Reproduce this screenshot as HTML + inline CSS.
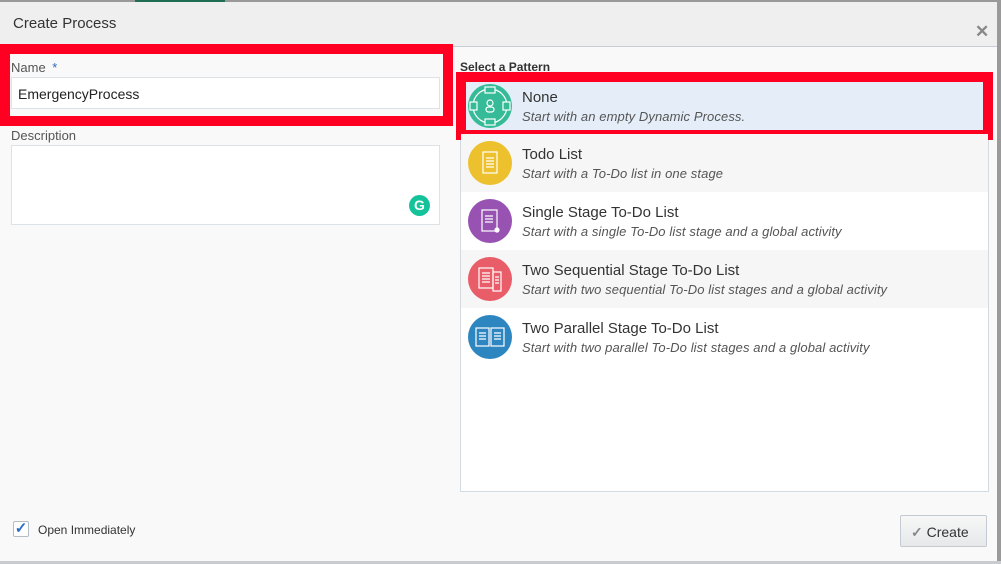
<!DOCTYPE html>
<html><head><style>
*{margin:0;padding:0;box-sizing:border-box}
body{width:1001px;height:564px;overflow:hidden;background:#f9f9f9;font-family:"Liberation Sans",sans-serif;position:relative;color:#333}
.a{position:absolute}
.row{position:absolute;left:461px;width:527px;height:58px}
.circ{position:absolute;left:7px;top:7px;width:44px;height:44px;border-radius:50%}
.t{position:absolute;left:61px;top:12px;font-size:15px;color:#333}
.s{position:absolute;left:61px;top:32px;font-size:13px;font-style:italic;color:#555;letter-spacing:0.1px}
</style></head><body>
<div class="a" style="left:0;top:0;width:1001px;height:2px;background:#999"></div>
<div class="a" style="left:135px;top:0;width:90px;height:2px;background:#1f6d52"></div>
<div class="a" style="left:0;top:2px;width:997px;height:45px;background:#efefef;border-bottom:1px solid #c5ced7"></div>
<div class="a" style="left:997px;top:0;width:4px;height:564px;background:#9a9a9a"></div>
<div class="a" style="left:0;top:561px;width:1001px;height:3px;background:#c8ccd0"></div>
<div class="a" style="left:13px;top:15px;font-size:15px;color:#333">Create Process</div>
<div class="a" style="left:975px;top:22px;font-size:17px;font-weight:bold;color:#888">✕</div>

<div class="a" style="left:0;top:44px;width:453px;height:82px;border:10px solid #ff0022;background:#f9f9f9"></div>
<div class="a" style="left:11px;top:60px;font-size:13px;color:#555">Name <span style="color:#2d6bb3;margin-left:3px">*</span></div>
<div class="a" style="left:11px;top:77px;width:429px;height:32px;background:#fff;border:1px solid #dde2e7;font-size:14px;padding:8px 6px;color:#222">EmergencyProcess</div>
<div class="a" style="left:11px;top:128px;font-size:13px;color:#555">Description</div>
<div class="a" style="left:11px;top:145px;width:429px;height:80px;background:#fff;border:1px solid #dde2e7"></div>
<div class="a" style="left:409px;top:195px;width:21px;height:21px;border-radius:50%;background:#15c39a;color:#fff;font-size:14px;font-weight:bold;text-align:center;line-height:21px">G</div>

<div class="a" style="left:460px;top:60px;font-size:12px;font-weight:bold;color:#333">Select a Pattern</div>
<div class="a" style="left:460px;top:72px;width:529px;height:420px;background:#fff;border:1px solid #d3dbe2"></div>
<div class="a" style="left:456px;top:72px;width:537px;height:68px;border:10px solid #ff0022;background:#e5eef8"></div>
<div class="row" style="top:77px">
 <div class="circ" style="background:#35bb97"><svg width="44" height="44" viewBox="0 0 44 44" fill="none" stroke="#fff" stroke-width="1.2"><circle cx="22" cy="22" r="17"/><rect x="17" y="3" width="10" height="6" fill="#35bb97"/><rect x="17" y="35" width="10" height="6" fill="#35bb97"/><rect x="2" y="18" width="7" height="8" fill="#35bb97"/><rect x="35" y="18" width="7" height="8" fill="#35bb97"/><circle cx="22" cy="19" r="3"/><rect x="18" y="23" width="8" height="5" rx="2.5"/></svg></div>
 <div class="t">None</div><div class="s">Start with an empty Dynamic Process.</div></div>
<div class="row" style="top:134px;background:#f6f6f6">
 <div class="circ" style="background:#ecc12d"><svg width="44" height="44" viewBox="0 0 44 44" fill="none" stroke="#fff" stroke-width="1.2"><rect x="15" y="11" width="14" height="21"/><path d="M18 17h8M18 20h8M18 23h8M18 26h8"/></svg></div>
 <div class="t">Todo List</div><div class="s">Start with a To-Do list in one stage</div></div>
<div class="row" style="top:192px">
 <div class="circ" style="background:#9752b2"><svg width="44" height="44" viewBox="0 0 44 44" fill="none" stroke="#fff" stroke-width="1.2"><rect x="14" y="11" width="15" height="21"/><path d="M17 17h8M17 20h8M17 23h8"/><circle cx="29" cy="31" r="2" fill="#fff"/></svg></div>
 <div class="t">Single Stage To-Do List</div><div class="s">Start with a single To-Do list stage and a global activity</div></div>
<div class="row" style="top:250px;background:#f6f6f6">
 <div class="circ" style="background:#e85d67"><svg width="44" height="44" viewBox="0 0 44 44" fill="none" stroke="#fff" stroke-width="1.2"><rect x="11" y="11" width="14" height="20"/><rect x="25" y="15" width="8" height="19"/><path d="M14 16h8M14 19h8M14 22h8M14 25h8M27 20h4M27 23h4M27 26h4"/></svg></div>
 <div class="t">Two Sequential Stage To-Do List</div><div class="s">Start with two sequential To-Do list stages and a global activity</div></div>
<div class="row" style="top:308px">
 <div class="circ" style="background:#2e86c1"><svg width="44" height="44" viewBox="0 0 44 44" fill="none" stroke="#fff" stroke-width="1.2"><rect x="8" y="13" width="13" height="18"/><rect x="23" y="13" width="13" height="18"/><path d="M11 18h7M11 21h7M11 24h7M26 18h7M26 21h7M26 24h7"/></svg></div>
 <div class="t">Two Parallel Stage To-Do List</div><div class="s">Start with two parallel To-Do list stages and a global activity</div></div>

<div class="a" style="left:13px;top:521px;width:16px;height:16px;border:1px solid #b5bcc4;border-radius:2px;background:#fff;color:#2a6ec4;font-size:15px;line-height:14px;text-align:center;font-weight:bold">✓</div>
<div class="a" style="left:38px;top:523px;font-size:12px;color:#333">Open Immediately</div>
<div class="a" style="left:900px;top:515px;width:87px;height:32px;border:1px solid #c4cbd2;border-radius:2px;background:linear-gradient(#f7f7f7,#e6e8ea);font-size:14px;padding:8px 0 0 10px;color:#333"><span style="color:#888;font-weight:bold">✓</span> Create</div>
</body></html>
